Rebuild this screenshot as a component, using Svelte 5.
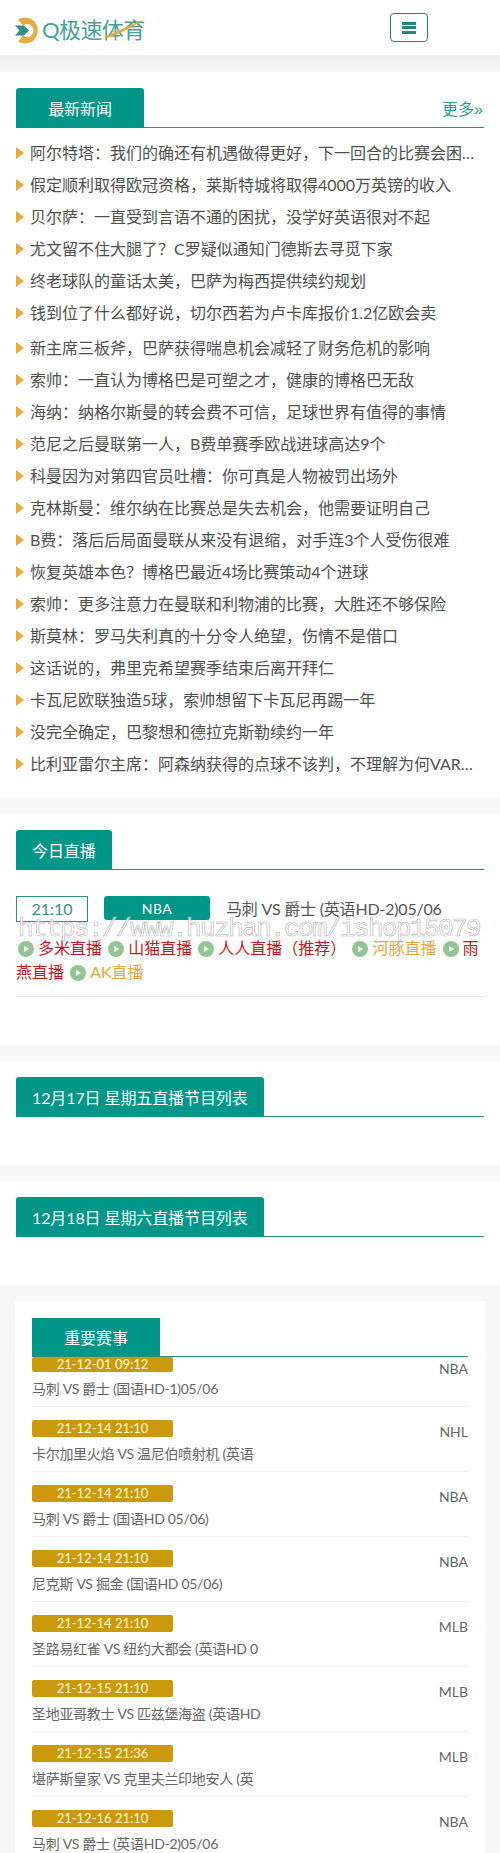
<script>
  // full-width punctuation, kept as escapes
  const c = '\uFF1A';
  const k = '\uFF0C';
  const q = '\uFF1F';

  const news = [
    `阿尔特塔${c}我们的确还有机遇做得更好${k}下一回合的比赛会困难重重`,
    `假定顺利取得欧冠资格${k}莱斯特城将取得4000万英镑的收入`,
    `贝尔萨${c}一直受到言语不通的困扰${k}没学好英语很对不起`,
    `尤文留不住大腿了${q}C罗疑似通知门德斯去寻觅下家`,
    `终老球队的童话太美${k}巴萨为梅西提供续约规划`,
    `钱到位了什么都好说${k}切尔西若为卢卡库报价1.2亿欧会卖`,
    `新主席三板斧${k}巴萨获得喘息机会减轻了财务危机的影响`,
    `索帅${c}一直认为博格巴是可塑之才${k}健康的博格巴无敌`,
    `海纳${c}纳格尔斯曼的转会费不可信${k}足球世界有值得的事情`,
    `范尼之后曼联第一人${k}B费单赛季欧战进球高达9个`,
    `科曼因为对第四官员吐槽${c}你可真是人物被罚出场外`,
    `克林斯曼${c}维尔纳在比赛总是失去机会${k}他需要证明自己`,
    `B费${c}落后后局面曼联从来没有退缩${k}对手连3个人受伤很难`,
    `恢复英雄本色${q}博格巴最近4场比赛策动4个进球`,
    `索帅${c}更多注意力在曼联和利物浦的比赛${k}大胜还不够保险`,
    `斯莫林${c}罗马失利真的十分令人绝望${k}伤情不是借口`,
    `这话说的${k}弗里克希望赛季结束后离开拜仁`,
    `卡瓦尼欧联独造5球${k}索帅想留下卡瓦尼再踢一年`,
    `没完全确定${k}巴黎想和德拉克斯勒续约一年`,
    `比利亚雷尔主席${c}阿森纳获得的点球不该判${k}不理解为何VAR不介入`
  ];

  const links = [
    { name: '多米直播', tone: 'red' },
    { name: '山猫直播', tone: 'red' },
    { name: '人人直播\uFF08推荐\uFF09', tone: 'red' },
    { name: '河豚直播', tone: 'amber' },
    { name: '雨燕直播', tone: 'red' },
    { name: 'AK直播', tone: 'amber' }
  ];

  const matches = [
    { time: '21-12-01 09:12', league: 'NBA', title: '马刺 VS 爵士 (国语HD-1)05/06' },
    { time: '21-12-14 21:10', league: 'NHL', title: '卡尔加里火焰 VS 温尼伯喷射机 (英语' },
    { time: '21-12-14 21:10', league: 'NBA', title: '马刺 VS 爵士 (国语HD 05/06)' },
    { time: '21-12-14 21:10', league: 'NBA', title: '尼克斯 VS 掘金 (国语HD 05/06)' },
    { time: '21-12-14 21:10', league: 'MLB', title: '圣路易红雀 VS 纽约大都会 (英语HD 0' },
    { time: '21-12-15 21:10', league: 'MLB', title: '圣地亚哥教士 VS 匹兹堡海盗 (英语HD' },
    { time: '21-12-15 21:36', league: 'MLB', title: '堪萨斯皇家 VS 克里夫兰印地安人 (英' },
    { time: '21-12-16 21:10', league: 'NBA', title: '马刺 VS 爵士 (英语HD-2)05/06' }
  ];
</script>

<div class="page">
  <header class="top">
    <div class="logo">
      <svg viewBox="0 0 26 27" width="26" height="27" aria-hidden="true">
        <path d="M3 2.5 A13 13 0 1 1 3 24.5 L8 18.5 A6.5 6.5 0 1 0 8 8.5 Z" fill="#e9a93b"/>
        <path d="M0 8.5 H9 L14 13.5 L9 18.5 H0 L4.5 13.5 Z" fill="#2f8f86"/>
      </svg>
      <span class="logo-text">Q极速体育</span>
      <svg class="swoosh" viewBox="0 0 40 20" width="40" height="20" aria-hidden="true">
        <path d="M1 18 C11 14 24 7 39 1 C29 9 15 15 5 19 Z" fill="#e9a93b"/>
      </svg>
    </div>
    <button class="menu" type="button" aria-label="菜单">
      <span></span><span></span><span></span>
    </button>
  </header>
  <div class="shade"></div>

  <section class="news">
    <div class="head">
      <h2 class="tab wide">最新新闻</h2>
      <a class="more" href="#more">更多»</a>
    </div>
    <ul>
      {#each news as line, i}
        <li class:gap={i === 6}><span class="arrow"></span><span class="line">{line}</span></li>
      {/each}
    </ul>
  </section>

  <div class="band"></div>

  <section class="today">
    <div class="head"><h2 class="tab">今日直播</h2></div>
    <div class="live">
      <div class="live-top">
        <span class="clock">21:10</span>
        <span class="league">NBA</span>
        <span class="live-title">马刺 VS 爵士 (英语HD-2)05/06</span>
      </div>
      <p class="links">
        {#each links as link}
          <span class="play"></span><a class={link.tone} href="#live">{link.name}</a>{' '}
        {/each}
      </p>
      <div class="mark">https://www.huzhan.com/ishop15079</div>
    </div>
  </section>

  <div class="band"></div>
  <section class="day"><div class="head"><h2 class="tab">12月17日 星期五直播节目列表</h2></div></section>
  <div class="band"></div>
  <section class="day"><div class="head"><h2 class="tab">12月18日 星期六直播节目列表</h2></div></section>

  <div class="foot">
    <section class="card">
      <div class="head"><h2 class="tab square wide">重要赛事</h2></div>
      {#each matches as m, i}
        <div class="row" class:first={i === 0}>
          <div class="row-main">
            <span class="date">{m.time}</span>
            <span class="match">{m.title}</span>
          </div>
          <span class="kind">{m.league}</span>
        </div>
      {/each}
    </section>
  </div>
</div>

<style>
  :global(body) {
    margin: 0;
    background: #fff;
  }
  .page {
    height: 1853px;
    overflow: hidden;
    font-family: Lato, "Noto Sans CJK SC", sans-serif;
    color: #444;
  }
  h2, ul, p { margin: 0; padding: 0; }
  a { text-decoration: none; }

  .top {
    height: 55px;
    display: flex;
    align-items: center;
    justify-content: space-between;
    padding: 0 72px 0 15px;
    background: #fff;
  }
  .logo {
    position: relative;
    display: flex;
    align-items: center;
    gap: 1px;
    margin-top: 5px;
  }
  .logo-text {
    font-size: 22px;
    line-height: 30px;
    letter-spacing: -0.6px;
    color: #46a196;
  }
  .swoosh {
    position: absolute;
    left: 88px;
    top: 4px;
  }
  .menu {
    width: 38px;
    height: 29px;
    display: flex;
    flex-direction: column;
    align-items: center;
    justify-content: center;
    gap: 1.5px;
    padding: 0;
    background: #fff;
    border: 1px solid #1f8a80;
    border-radius: 4px;
  }
  .menu span {
    width: 14px;
    height: 3px;
    background: #1f8a80;
  }
  .shade {
    height: 17px;
    background: linear-gradient(#ececec, #f8f8f8);
  }

  .head {
    display: flex;
    justify-content: space-between;
    align-items: center;
    border-bottom: 1px solid #2a8f87;
  }
  .tab {
    height: 40px;
    margin-bottom: -1px;
    padding: 0 16px;
    box-sizing: border-box;
    display: flex;
    align-items: center;
    justify-content: center;
    background: #009688;
    color: #fff;
    font-size: 16px;
    font-weight: 400;
    letter-spacing: -0.1px;
    border-radius: 3px 3px 0 0;
    white-space: nowrap;
  }
  .tab.wide { width: 128px; }
  .tab.square { height: 38px; margin-bottom: 0; border-radius: 0; }
  .more {
    font-family: "Liberation Sans", "Noto Sans CJK SC", sans-serif;
    font-size: 16px;
    color: #2a9d90;
    padding-right: 1px;
  }

  .news {
    padding: 16px 16px 0;
    height: 726px;
    box-sizing: border-box;
  }
  .news ul {
    list-style: none;
    padding-top: 8px;
  }
  .news li {
    height: 32px;
    display: flex;
    align-items: center;
    font-size: 16px;
    color: #505050;
  }
  .news li.gap { margin-top: 3px; }
  .arrow {
    flex: none;
    width: 0;
    height: 0;
    margin: 2px 6px 0 0;
    border-left: 8px solid #e9a93b;
    border-top: 6px solid transparent;
    border-bottom: 6px solid transparent;
  }
  .line {
    min-width: 0;
    padding-right: 6px;
    overflow: hidden;
    white-space: nowrap;
    text-overflow: ellipsis;
  }

  .band {
    height: 16px;
    background: #f8f8f8;
  }

  .today {
    height: 231px;
    padding: 16px 16px 0;
    box-sizing: border-box;
  }
  .live {
    position: relative;
    margin-top: 26px;
    padding-bottom: 12px;
    border-bottom: 1px solid #e6e6e6;
  }
  .live-top {
    display: flex;
    align-items: flex-start;
    height: 28px;
  }
  .clock {
    width: 72px;
    height: 26px;
    box-sizing: border-box;
    border: 1px solid #2a8f87;
    text-align: center;
    font-size: 16px;
    line-height: 24px;
    color: #3a8f88;
  }
  .league {
    width: 106px;
    height: 24px;
    margin: 0 16px;
    border-radius: 3px;
    background: #009688;
    color: #fff;
    text-align: center;
    font-size: 14px;
    line-height: 25px;
    letter-spacing: 0.5px;
  }
  .live-title {
    font-size: 16px;
    line-height: 25px;
    letter-spacing: -0.2px;
    color: #555;
    white-space: nowrap;
  }
  .links {
    font-size: 16px;
    line-height: 24px;
    margin-top: 12px;
    word-break: break-all;
  }
  .play {
    display: inline-block;
    position: relative;
    width: 16px;
    height: 16px;
    margin: 0 4px 0 2px;
    border-radius: 50%;
    background: #93c493;
    vertical-align: -3px;
  }
  .play::after {
    content: '';
    position: absolute;
    left: 6px;
    top: 4.5px;
    border-left: 5px solid #fff;
    border-top: 3.5px solid transparent;
    border-bottom: 3.5px solid transparent;
  }
  .red { color: #c9151e; }
  .amber { color: #eaa73a; }
  .mark {
    position: absolute;
    left: 2px;
    top: 18px;
    font-family: "Liberation Mono", monospace;
    font-size: 26px;
    line-height: 30px;
    letter-spacing: -1.6px;
    white-space: nowrap;
    color: rgba(255, 255, 255, 0.7);
    -webkit-text-stroke: 0.6px #b4b4b4;
    pointer-events: none;
  }

  .day {
    height: 104px;
    padding: 16px 16px 0;
    box-sizing: border-box;
  }

  .foot {
    background: #f8f8f8;
    padding: 16px 15px 0;
    height: 568px;
    box-sizing: border-box;
  }
  .card {
    background: #fff;
    padding: 17px 17px 0;
    height: 100%;
    box-sizing: border-box;
  }
  .row {
    display: flex;
    justify-content: space-between;
    align-items: flex-start;
    height: 65px;
    box-sizing: border-box;
    padding-top: 13px;
    border-bottom: 1px solid #f2f2f2;
  }
  .row.first {
    height: 50px;
    padding-top: 0;
  }
  .row-main {
    display: flex;
    flex-direction: column;
    align-items: flex-start;
  }
  .date {
    width: 141px;
    height: 17px;
    border-radius: 2px;
    background: #cb9a0c;
    color: #fff8d8;
    text-align: center;
    font-size: 13px;
    line-height: 17px;
  }
  .row.first .date { height: 15px; line-height: 14px; }
  .match {
    margin-top: 5px;
    font-size: 14px;
    line-height: 24px;
    letter-spacing: -0.3px;
    color: #666;
    white-space: nowrap;
  }
  .kind {
    font-size: 14px;
    line-height: 24px;
    color: #666;
  }
</style>
